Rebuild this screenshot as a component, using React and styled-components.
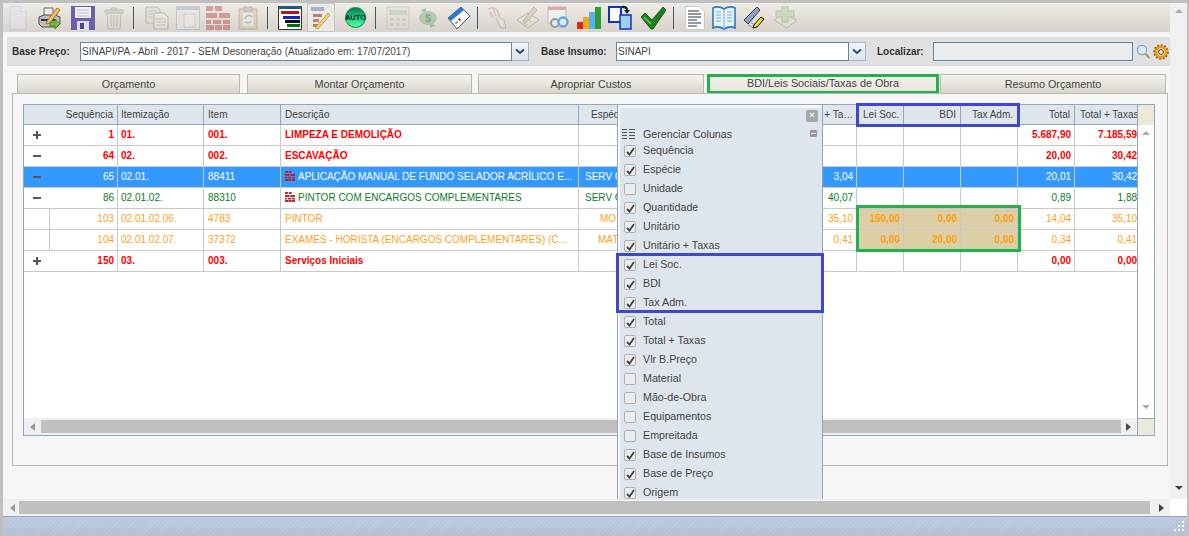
import React from 'react'
import styled, { createGlobalStyle } from 'styled-components'

const GlobalStyle = createGlobalStyle`
html, body {
    margin: 0;
    padding: 0;
    background: #c0c0c0;
    font-family: "Liberation Sans", Arial, sans-serif;
    font-size: 10px;
    color: #333;
}
* { box-sizing: border-box; }
`

const Page = styled.div`
    width: 1189px;
    height: 536px;
    padding: 3px 2px 2px 3px;
    background: #c0c0c0;
    display: flex;
    flex-direction: column;
    overflow: hidden;
`
const Viewport = styled.div`
    display: grid;
    grid-template-columns: 1167px 17px;
    grid-template-rows: 496px 17px;
    background: #f6f6f6;
`
const Content = styled.div`
    position: relative;
    overflow: hidden;
    background: #f6f6f6;
`
const Toolbar = styled.div`
    height: 29px;
    padding-left: 6px;
    display: flex;
    align-items: center;
    background: linear-gradient(#efebe6, #d7d2ca);
`
const Tool = styled.div`
    flex: none;
    margin-left: ${p => p.$ml || 0}px;
    width: ${p => p.$w}px;
    height: 25px;
    display: flex;
    align-items: center;
    justify-content: center;
    opacity: ${p => p.$off ? 0.38 : 1};
    ${p => p.$active && `
        height: 29px;
        background: #ebe9e6;
        border: 1px solid #c6c6c6;
    `}
`
const Sep = styled.div`
    flex: none;
    margin: 0 1px 0 ${p => p.$ml}px;
    width: 1px;
    height: 22px;
    background: #44566c;
`
const AutoBall = styled.div`
    width: 21px;
    height: 21px;
    border-radius: 50%;
    border: 1px solid #0c7a52;
    background: linear-gradient(#0b7a58, #17c878 45%, #4dffa0);
    color: #06231a;
    font-size: 7.5px;
    font-weight: bold;
    display: flex;
    align-items: center;
    justify-content: center;
`
const FilterBar = styled.div`
    margin: 5px 0 0 4px;
    height: 29px;
    padding-left: 5px;
    display: flex;
    align-items: center;
    background: #e0e0e0;
`
const Label = styled.span`
    flex: none;
    width: ${p => p.$w}px;
    margin-left: ${p => p.$ml || 0}px;
    font-weight: bold;
    color: #333;
`
const Field = styled.div`
    flex: none;
    width: ${p => p.$w}px;
    height: 19px;
    padding-left: 1px;
    display: flex;
    align-items: center;
    border: 1px solid #5d88ab;
    background: ${p => p.$empty ? '#ececec' : '#fff'};
    color: #444;
    font-size: 10px;
    white-space: nowrap;
`
const DropButton = styled.div`
    flex: none;
    width: 17px;
    height: 19px;
    display: flex;
    align-items: center;
    justify-content: center;
    border: 1px solid #a9b5c8;
    border-left: none;
    background: linear-gradient(#f2f4f8, #dde2ea);
`
const Finder = styled.div`
    flex: none;
    margin-left: ${p => p.$ml}px;
    display: flex;
`
const Tabs = styled.div`
    margin: 8px 0 0 14px;
    display: flex;
    height: 20px;
`
const Tab = styled.div`
    flex: none;
    width: ${p => p.$w}px;
    margin-left: ${p => p.$ml || 0}px;
    padding-bottom: 2px;
    display: flex;
    align-items: center;
    justify-content: center;
    border: 1px solid #bcb8b0;
    border-bottom: none;
    background: linear-gradient(#f4f2ee, #d9d4cb);
    color: #444;
    font-size: 10.8px;
    ${p => p.$marked && `
        border: none;
        background: linear-gradient(#f6f5f1, #e4e1d9);
        box-shadow: inset 0 0 0 3px #22b14c;
    `}
`
const Panel = styled.div`
    position: relative;
    margin: -1px 0 0 9px;
    width: 1156px;
    height: 373px;
    padding: 10px 0 0 10px;
    border: 1px solid #bcb9b2;
    background: #f6f6f6;
`
const Grid = styled.div`
    position: relative;
    width: 1132px;
    height: 332px;
    display: grid;
    grid-template-columns: 1113px 1fr;
    grid-template-rows: 1fr 17px;
    border: 1px solid #8fa8c0;
    background: #fff;
`
const TableArea = styled.div`
    overflow: hidden;
    background: #fff;
`
const Table = styled.table`
    width: 1113px;
    table-layout: fixed;
    border-collapse: separate;
    border-spacing: 0;
    font-size: 10px;
`
const Th = styled.th`
    height: 20px;
    padding: 0 ${p => p.$right ? '4px' : '2px'} 0 ${p => p.$pad ?? (p.$right ? 2 : 4)}px;
    background: #dfe5ec;
    border-right: 1px solid #8fa8c0;
    border-bottom: 1px solid #8fa8c0;
    color: #444;
    font-weight: normal;
    text-align: ${p => p.$right ? 'right' : 'left'};
    white-space: nowrap;
    overflow: hidden;
    text-overflow: ${p => p.$cut ? 'ellipsis' : 'clip'};
    &:last-child { border-right: none; padding-right: 0; }
`
const tones = {
    red: { color: '#ff0000', weight: 'bold', bg: '#fff' },
    blue: { color: '#fff', weight: 'normal', bg: '#3399ff' },
    green: { color: '#0a7a1e', weight: 'normal', bg: '#fff' },
    orange: { color: '#ff9f1c', weight: 'normal', bg: '#fff' },
}
const Row = styled.tr`
    color: ${p => tones[p.$tone].color};
    font-weight: ${p => tones[p.$tone].weight};
    background: ${p => tones[p.$tone].bg};
`
const Td = styled.td`
    height: 21px;
    padding: 0 ${p => p.$right ? '3px' : '2px'} 2px ${p => p.$pad ?? 4}px;
    border-right: 1px solid #c8c8c8;
    border-bottom: 1px solid #c8c8c8;
    white-space: nowrap;
    overflow: hidden;
    text-align: ${p => p.$right ? 'right' : 'left'};
    ${p => p.$fill && `
        background: #dccfa8;
        color: #ff9f0a;
        font-weight: bold;
    `}
    &:last-child { border-right: none; padding-right: 0; }
`
const ToggleCell = styled.td`
    height: 21px;
    padding: 0;
    border-bottom: 1px solid #c8c8c8;
    border-right: ${p => p.$leaf ? '1px solid #c8c8c8' : 'none'};
`
const Toggle = styled.span`
    position: relative;
    display: block;
    width: 8px;
    height: 8px;
    margin-left: 9px;
    &::before {
        content: "";
        position: absolute;
        left: 0;
        top: 3px;
        width: 8px;
        height: 2px;
        background: #555;
    }
    ${p => p.$plus && `
        &::after {
            content: "";
            position: absolute;
            left: 3px;
            top: 0;
            width: 2px;
            height: 8px;
            background: #555;
        }
    `}
`
const BrickBox = styled.span`
    display: inline-block;
    vertical-align: -1px;
    margin: 0 3px 0 0;
    height: 10px;
`
const VScroll = styled.div`
    display: flex;
    flex-direction: column;
    align-items: center;
    border-left: 1px solid #8fa8c0;
    background: #fff;
`
const ScrollCorner = styled.div`
    width: 100%;
    height: ${p => p.$h}px;
    flex: none;
    background: #ece9d8;
    ${p => p.$bottom && 'border-top: 1px solid #8fa8c0; border-left: 1px solid #8fa8c0;'}
`
const HScroll = styled.div`
    display: flex;
    align-items: center;
    padding: 0 ${p => p.$endPad}px 0 ${p => p.$startPad}px;
    background: #f0f0f0;
`
const Thumb = styled.div`
    flex: 1;
    height: 13px;
    margin: 0 ${p => p.$end}px 0 ${p => p.$start}px;
    background: #c0c0c0;
`
const Arrow = styled.span`
    flex: none;
    display: block;
    width: 0;
    height: 0;
    border-style: solid;
    border-color: transparent;
    ${p => p.$dir === 'left' && `border-width: 4px 5px 4px 0; border-right-color: ${p.$color};`}
    ${p => p.$dir === 'right' && `border-width: 4px 0 4px 5px; border-left-color: ${p.$color};`}
    ${p => p.$dir === 'up' && `border-width: 0 4px 4px; border-bottom-color: ${p.$color};`}
    ${p => p.$dir === 'down' && `border-width: 4px 4px 0; border-top-color: ${p.$color};`}
`
const VTrack = styled.div`
    flex: 1;
    display: flex;
    flex-direction: column;
    justify-content: space-between;
    align-items: center;
    padding: 6px 0 9px;
`
const PageVTrack = styled(VTrack)`
    background: #f0f0f0;
`
const HeaderMark = styled.div`
    position: absolute;
    left: 832px;
    top: -2px;
    width: 164px;
    height: 24px;
    border: 3px solid #3f48cc;
    pointer-events: none;
`
const CellsMark = styled.div`
    position: absolute;
    left: 832px;
    top: 100px;
    width: 165px;
    height: 47px;
    border: 3px solid #22b14c;
    pointer-events: none;
`
const Popup = styled.div`
    position: absolute;
    left: 614px;
    top: 101px;
    width: 206px;
    height: 420px;
    padding: 3px 0 0 2px;
    border: 1px solid #8fa8c0;
    background: #f4f6f8;
`
const PopupBody = styled.div`
    position: relative;
    height: 100%;
    padding-top: 17px;
    background: #dfe5ec;
    color: #444;
    font-size: 10.7px;
`
const CloseBtn = styled.div`
    position: absolute;
    right: 4px;
    top: 2px;
    width: 12px;
    height: 12px;
    border-radius: 2px;
    background: #a6a6a6;
    color: #eee;
    font-size: 9px;
    font-weight: bold;
    line-height: 11px;
    text-align: center;
`
const PopupHead = styled.div`
    position: relative;
    height: 18px;
    margin-bottom: -3px;
    padding-left: 23px;
    display: flex;
    align-items: center;
`
const ColumnsGlyph = styled.span`
    position: absolute;
    left: 2px;
    top: 4px;
    line-height: 0;
`
const Collapse = styled.span`
    position: absolute;
    right: 5px;
    top: 5px;
    width: 7px;
    height: 7px;
    border-radius: 1px;
    background: #9a9a9a;
    &::after {
        content: "";
        position: absolute;
        left: 1px;
        top: 3px;
        width: 5px;
        height: 1px;
        background: #eee;
    }
`
const OptionGroup = styled.div`
    position: relative;
    &::after {
        content: "";
        position: absolute;
        left: -4px;
        right: -2px;
        top: -1px;
        bottom: -2px;
        border: 3px solid #3f48cc;
        pointer-events: none;
    }
`
const Option = styled.div`
    height: 19px;
    padding-left: 23px;
    position: relative;
    display: flex;
    align-items: center;
`
const Check = styled.span`
    position: absolute;
    left: 4px;
    top: 5px;
    width: 12px;
    height: 12px;
    border: 1px solid #b0b0b0;
    border-radius: 2px;
    background: #ececec;
    display: flex;
    align-items: center;
    justify-content: center;
`
const HBar = styled(HScroll)`
    height: 17px;
`
const BarCorner = styled.div`
    background: #fff;
`
const StatusBar = styled.div`
    position: relative;
    height: 18px;
    border-top: 1px solid #8fa8c8;
    background:
        repeating-linear-gradient(135deg, rgba(255,255,255,.1) 0 1px, transparent 1px 3px),
        linear-gradient(#bcc8dc, #b2c0d8);
`
const Grip = styled.svg`
    position: absolute;
    right: 2px;
    bottom: 2px;
`

const IconNew = () => (
    <svg width="18" height="24" viewBox="0 0 18 24">
        <path d="M1 .5h11l5 5v18H1z" fill="#dde8f0" stroke="#aebcc8" />
        <path d="M12 .5v5h5" fill="#fff" stroke="#aebcc8" />
    </svg>
)
const IconPrint = () => (
    <svg width="23" height="24" viewBox="0 0 23 24">
        <path d="M6 2h9v9H6z" fill="#eee" stroke="#666" />
        <path d="M1 11l5-2h11l5 2v7l-3 3H4l-3-3z" fill="#bdbdbd" stroke="#4d4d4d" />
        <path d="M3 14h15" stroke="#333" strokeWidth="2" />
        <path d="M9 15L19 2l3 2-10 13-4 1z" fill="#f0c060" stroke="#a8741c" />
        <path d="M12 16h5v-3l5 5-5 5v-3h-5z" fill="#6dbd3c" stroke="#3f7f1e" strokeWidth=".7" />
    </svg>
)
const IconSave = () => (
    <svg width="24" height="24" viewBox="0 0 24 24">
        <path d="M0 0h24v24H0z" fill="#6a60b0" />
        <path d="M4 1h16v11H4z" fill="#f2f2f6" />
        <path d="M6 4h12M6 7h12M6 10h12" stroke="#b8b8cc" />
        <path d="M6 15h12v9H6z" fill="#dcdce6" />
        <path d="M9 17h4v6H9z" fill="#4c4390" />
    </svg>
)
const IconTrash = () => (
    <svg width="20" height="24" viewBox="0 0 20 24">
        <path d="M7 2h6v2H7zM1 4h18v3H1z" fill="#c4c4c4" stroke="#888" />
        <path d="M3 7h14l-1 16H4z" fill="#dcdcdc" stroke="#888" />
        <path d="M7 9v12M10 9v12M13 9v12" stroke="#8c8c8c" />
    </svg>
)
const IconCopy = () => (
    <svg width="24" height="24" viewBox="0 0 24 24">
        <path d="M1 1h11l3 3v13H1z" fill="#ddd" stroke="#777" />
        <path d="M9 7h10l4 4v12H9z" fill="#eee" stroke="#777" />
        <path d="M3 5h9M3 8h5M3 11h5M11 13h10M11 16h10M11 19h10" stroke="#999" />
    </svg>
)
const IconWindow = () => (
    <svg width="24" height="24" viewBox="0 0 24 24">
        <path d="M.5 .5h23v23H.5z" fill="#e6ecf2" stroke="#86a4c0" />
        <path d="M1 1h22v3H1z" fill="#86a4c0" />
        <path d="M8 8h11v13H8z" fill="#f4f4f4" stroke="#aaa" />
    </svg>
)
const IconBricks = ({ size = 24 }) => (
    <svg width={size} height={size} viewBox="0 0 24 24">
        <path d="M0 0h7v5H0zM0 7h11v5H0zM0 14h5v4H0zM0 19h8v5H0zM9 19h7v5H9zM17 19h7v5h-7zM7 14h8v4H7zM17 14h7v4h-7zM13 7h11v5H13zM9 0h7v5H9z" fill="#b22a2a" />
    </svg>
)
const IconClipboard = () => (
    <svg width="20" height="24" viewBox="0 0 20 24">
        <path d="M1 3h18v20H1z" fill="#d8c090" stroke="#8a6a3a" />
        <path d="M4 6h12v15H4z" fill="#f2f2f2" stroke="#aaa" />
        <path d="M6 1h8v4H6z" fill="#aaa" stroke="#666" />
        <path d="M7 13a4 4 0 0 1 7-2M13 15a4 4 0 0 1-6 1" fill="none" stroke="#3f9a4a" strokeWidth="1.5" />
    </svg>
)
const IconBars = () => (
    <svg width="24" height="24" viewBox="0 0 24 24">
        <path d="M.5 1.5h23v22H.5z" fill="#fff" stroke="#333" />
        <path d="M0 0h24v3H0z" fill="#1c5a80" />
        <path d="M3 5h18v3H3z" fill="#b01818" />
        <path d="M5 10h17v3H5z" fill="#1428c0" />
        <path d="M7 14h15v3H7z" fill="#111" />
        <path d="M9 18h13v3H9z" fill="#0b6a1a" />
    </svg>
)
const IconListEdit = () => (
    <svg width="20" height="24" viewBox="0 0 20 24">
        <path d="M0 1h13v4H0z" fill="#a8b0d0" />
        <path d="M2 8h9v3H2zM2 13h6v3H2zM2 18h5v3H2z" fill="#c08070" />
        <path d="M4 22L17 7l2 2L7 23z" fill="#f0d070" stroke="#b09040" strokeWidth=".7" />
    </svg>
)
const IconCalc = () => (
    <svg width="24" height="24" viewBox="0 0 24 24">
        <path d="M1 1h22v22H1z" fill="#e2e2d8" stroke="#aaa" />
        <path d="M3 4h18v5H3z" fill="#a0c0a0" />
        <path d="M4 12h4v3H4zM10 12h4v3h-4zM16 12h4v3h-4zM4 17h4v3H4zM10 17h4v3h-4zM16 17h4v3h-4z" fill="#bbb" />
    </svg>
)
const IconDollar = () => (
    <svg width="20" height="24" viewBox="0 0 20 24">
        <ellipse cx="10" cy="12" rx="9" ry="7" fill="#5cb060" />
        <path d="M2 5l6-3v4zM18 19l-6 3v-4z" fill="#3a8a40" />
        <text x="10" y="16" textAnchor="middle" fontSize="11" fontWeight="bold" fontFamily="Liberation Sans" fill="#123c18">$</text>
    </svg>
)
const IconCard = () => (
    <svg width="24" height="24" viewBox="0 0 24 24">
        <path d="M1 12L14 1l9 9-13 13z" fill="#fff" stroke="#555" />
        <path d="M1 12L14 1l3 3L4 15z" fill="#2a7ad8" />
        <path d="M11 13l2-1 1 2-2 1z" fill="#d02020" />
        <path d="M8 17l2-2 1 1-2 2z" fill="#2a7ad8" />
    </svg>
)
const IconHand = () => (
    <svg width="22" height="24" viewBox="0 0 22 24">
        <path d="M2 4c2-3 7-3 9 0l3 8 4 2v5M4 6l3 5M7 3l3 7" fill="none" stroke="#c08a80" strokeWidth="1.5" />
        <path d="M10 12l5 10h5l-2-8" fill="#eee" stroke="#777" />
    </svg>
)
const IconPencilNote = () => (
    <svg width="24" height="24" viewBox="0 0 24 24">
        <path d="M1 14l11-7 11 7-11 8z" fill="#efe8c8" stroke="#777" />
        <path d="M7 15l2 3 12-14-3-3z" fill="#c8b890" stroke="#777" />
        <path d="M6 16l6 3M10 13l6 3" stroke="#a89a60" />
    </svg>
)
const IconGears = () => (
    <svg width="24" height="24" viewBox="0 0 24 24">
        <path d="M2 1h18v16H2z" fill="#eee" stroke="#bbb" />
        <path d="M2 1h18v3H2z" fill="#e0a8a8" />
        <circle cx="9" cy="17" r="4" fill="#e6e6e6" stroke="#999" strokeWidth="2" />
        <circle cx="17" cy="16" r="4.5" fill="#dcecf8" stroke="#6aa4d8" strokeWidth="2.4" />
    </svg>
)
const IconChart = () => (
    <svg width="25" height="24" viewBox="0 0 25 24">
        <path d="M0 16h6v7H0z" fill="#e02818" />
        <path d="M6 11h6v12H6z" fill="#f0a818" />
        <path d="M12 6h6v17h-6z" fill="#58b0e8" />
        <path d="M18 1h6v22h-6z" fill="#2f9a38" />
    </svg>
)
const IconSwap = () => (
    <svg width="24" height="25" viewBox="0 0 24 25">
        <path d="M1 2h12v15H1z" fill="#fff" stroke="#1030c0" strokeWidth="2" />
        <path d="M12 10h11v14H12z" fill="#9cd0f0" stroke="#1030c0" strokeWidth="1.5" />
        <path d="M14 1c4-1 6 1 6 4h2l-3 4-3-4h2c0-1-1-2-4-2z" fill="#123" />
    </svg>
)
const IconCheck = () => (
    <svg width="25" height="24" viewBox="0 0 25 24">
        <path d="M0 11l4-4 7 7L22 1l3 3-13 19h-2z" fill="#1f7d1f" stroke="#0c4c10" strokeWidth=".8" />
        <path d="M3 11l7 7" stroke="#5cbb4a" strokeWidth="2" />
    </svg>
)
const IconLines = () => (
    <svg width="20" height="24" viewBox="0 0 20 24">
        <path d="M.5 .5h14l5 5v18H.5z" fill="#fff" stroke="#ccc" />
        <path d="M3 5h11M3 8h13M3 11h13M3 14h9M3 17h13M3 20h9" stroke="#234" />
    </svg>
)
const IconBook = () => (
    <svg width="24" height="24" viewBox="0 0 24 24">
        <path d="M1 2c4-2 8-1 11 1 3-2 7-3 11-1v20c-4-2-8-1-11 1-3-2-7-3-11-1z" fill="#e8f2fc" stroke="#2a78c8" strokeWidth="1.6" />
        <path d="M12 3v20M4 6h5M4 9h5M4 12h5M4 15h5M15 6h5M15 9h5M15 12h5M15 15h5" stroke="#7aa8d8" />
    </svg>
)
const IconPen = () => (
    <svg width="22" height="24" viewBox="0 0 22 24">
        <path d="M1 14L14 1l3 3L5 18z" fill="#8aa4c0" stroke="#334" />
        <path d="M5 19l6 3M8 17l5 2" stroke="#99a" />
        <path d="M11 19l7-8 3 2-7 8-4 1z" fill="#f4e020" stroke="#111" />
    </svg>
)
const IconPlus = () => (
    <svg width="25" height="24" viewBox="0 0 25 24">
        <path d="M1 14l9-6 14 6-10 8z" fill="#e8e4d8" stroke="#888" />
        <path d="M9 0h6v5h6v6h-6v5H9v-5H3V5h6z" fill="#9ccf90" stroke="#6a9a60" />
    </svg>
)
const Chevron = () => (
    <svg width="10" height="7" viewBox="0 0 10 7">
        <path d="M1 1.5l4 3.5 4-3.5" fill="none" stroke="#204a80" strokeWidth="2" />
    </svg>
)
const IconSearch = () => (
    <svg width="15" height="16" viewBox="0 0 15 16">
        <circle cx="6" cy="6" r="4.6" fill="#d8ecfa" stroke="#7aa8d0" strokeWidth="1.3" />
        <path d="M9.5 10l4 4" stroke="#c09050" strokeWidth="2" />
    </svg>
)
const IconGear = () => (
    <svg width="16" height="16" viewBox="0 0 16 16">
        <circle cx="8" cy="8" r="5.2" fill="none" stroke="#e89a20" strokeWidth="3" />
        <circle cx="8" cy="8" r="7" fill="none" stroke="#a86a10" strokeWidth="1.6" strokeDasharray="2 1.6" />
        <circle cx="8" cy="8" r="2.4" fill="#fbeed0" stroke="#6a4008" />
    </svg>
)
const CheckMark = () => (
    <svg width="9" height="9" viewBox="0 0 9 9">
        <path d="M1 5l2.5 2.5L8 1" fill="none" stroke="#444" strokeWidth="1.8" />
    </svg>
)

const rows = [
    { tone: 'red', plus: true, seq: '1', code: '01.', item: '001.', desc: 'LIMPEZA E DEMOLIÇÃO', total: '5.687,90', taxes: '7.185,59' },
    { tone: 'red', seq: '64', code: '02.', item: '002.', desc: 'ESCAVAÇÃO', total: '20,00', taxes: '30,42' },
    { tone: 'blue', seq: '65', code: '02.01.', item: '88411', brick: true, desc: 'APLICAÇÃO MANUAL DE FUNDO SELADOR ACRÍLICO E...', kind: 'SERV C', unit: '3,04', total: '20,01', taxes: '30,42' },
    { tone: 'green', seq: '86', code: '02.01.02.', item: '88310', brick: true, desc: 'PINTOR COM ENCARGOS COMPLEMENTARES', kind: 'SERV C', unit: '40,07', total: '0,89', taxes: '1,88' },
    { tone: 'orange', leaf: true, seq: '103', code: '02.01.02.06.', item: '4783', desc: 'PINTOR', kind: 'MO', kindPad: 21, unit: '35,10', lei: '150,00', bdi: '0,00', adm: '0,00', total: '14,04', taxes: '35,10' },
    { tone: 'orange', leaf: true, seq: '104', code: '02.01.02.07.', item: '37372', desc: 'EXAMES - HORISTA (ENCARGOS COMPLEMENTARES) (C...', kind: 'MAT', kindPad: 19, unit: '0,41', lei: '0,00', bdi: '20,00', adm: '0,00', total: '0,34', taxes: '0,41' },
    { tone: 'red', plus: true, seq: '150', code: '03.', item: '003.', desc: 'Serviços Iniciais', total: '0,00', taxes: '0,00' },
]

const widths = [26, 68, 86, 77, 298, 64, 70, 70, 74, 47, 57, 57, 57, 62]

const optionsBefore = [['Sequência', true], ['Espécie', true], ['Unidade', false], ['Quantidade', true], ['Unitário', true], ['Unitário + Taxas', true]]
const optionsMarked = [['Lei Soc.', true], ['BDI', true], ['Tax Adm.', true]]
const optionsAfter = [['Total', true], ['Total + Taxas', true], ['Vlr B.Preço', true], ['Material', false], ['Mão-de-Obra', false], ['Equipamentos', false], ['Empreitada', false], ['Base de Insumos', true], ['Base de Preço', true], ['Origem', true]]

function ColumnOption({ name, on }) {
    return (
        <Option>
            <Check>{on && <CheckMark />}</Check>
            {name}
        </Option>
    )
}

function DataRow({ row }) {
    const fill = Boolean(row.lei)
    return (
        <Row $tone={row.tone}>
            <ToggleCell $leaf={row.leaf}>{!row.leaf && <Toggle $plus={row.plus} />}</ToggleCell>
            <Td $right>{row.seq}</Td>
            <Td $pad={3}>{row.code}</Td>
            <Td>{row.item}</Td>
            <Td>
                {row.brick && <BrickBox><IconBricks size={10} /></BrickBox>}
                {row.desc}
            </Td>
            <Td $pad={row.kindPad ?? 6}>{row.kind}</Td>
            <Td />
            <Td />
            <Td $right>{row.unit}</Td>
            <Td $right $fill={fill}>{row.lei}</Td>
            <Td $right $fill={fill}>{row.bdi}</Td>
            <Td $right $fill={fill}>{row.adm}</Td>
            <Td $right>{row.total}</Td>
            <Td $right>{row.taxes}</Td>
        </Row>
    )
}

function App() {
    return (
        <Page>
            <GlobalStyle />
            <Viewport>
                <Content>
                    <Toolbar>
                        <Tool $w={18} $off><IconNew /></Tool>
                        <Tool $w={23} $ml={11}><IconPrint /></Tool>
                        <Tool $w={24} $ml={10}><IconSave /></Tool>
                        <Tool $w={20} $ml={9} $off><IconTrash /></Tool>
                        <Sep $ml={9} />
                        <Tool $w={24} $ml={10} $off><IconCopy /></Tool>
                        <Tool $w={24} $ml={7} $off><IconWindow /></Tool>
                        <Tool $w={24} $ml={6} $off><IconBricks /></Tool>
                        <Tool $w={20} $ml={8} $off><IconClipboard /></Tool>
                        <Sep $ml={9} />
                        <Tool $w={24} $ml={9}><IconBars /></Tool>
                        <Tool $w={28} $ml={5} $active><IconListEdit /></Tool>
                        <Tool $w={21} $ml={10}><AutoBall>AUTO</AutoBall></Tool>
                        <Sep $ml={9} />
                        <Tool $w={24} $ml={9} $off><IconCalc /></Tool>
                        <Tool $w={20} $ml={8} $off><IconDollar /></Tool>
                        <Tool $w={24} $ml={9}><IconCard /></Tool>
                        <Sep $ml={6} />
                        <Tool $w={22} $ml={7} $off><IconHand /></Tool>
                        <Tool $w={24} $ml={8} $off><IconPencilNote /></Tool>
                        <Tool $w={24} $ml={6}><IconGears /></Tool>
                        <Tool $w={25} $ml={7}><IconChart /></Tool>
                        <Tool $w={24} $ml={6}><IconSwap /></Tool>
                        <Tool $w={25} $ml={9}><IconCheck /></Tool>
                        <Sep $ml={7} />
                        <Tool $w={20} $ml={10}><IconLines /></Tool>
                        <Tool $w={24} $ml={7}><IconBook /></Tool>
                        <Tool $w={22} $ml={7}><IconPen /></Tool>
                        <Tool $w={25} $ml={8} $off><IconPlus /></Tool>
                    </Toolbar>

                    <FilterBar>
                        <Label $w={68}>Base Preço:</Label>
                        <Field $w={432}>SINAPI/PA - Abril - 2017 - SEM Desoneração (Atualizado em: 17/07/2017)</Field>
                        <DropButton><Chevron /></DropButton>
                        <Label $w={75} $ml={12}>Base Insumo:</Label>
                        <Field $w={233}>SINAPI</Field>
                        <DropButton><Chevron /></DropButton>
                        <Label $w={56} $ml={11}>Localizar:</Label>
                        <Field $w={200} $empty />
                        <Finder $ml={3}><IconSearch /></Finder>
                        <Finder $ml={2}><IconGear /></Finder>
                    </FilterBar>

                    <Tabs>
                        <Tab $w={223}>Orçamento</Tab>
                        <Tab $w={225} $ml={7}>Montar Orçamento</Tab>
                        <Tab $w={226} $ml={6}>Apropriar Custos</Tab>
                        <Tab $w={232} $ml={3} $marked>BDI/Leis Sociais/Taxas de Obra</Tab>
                        <Tab $w={226} $ml={1}>Resumo Orçamento</Tab>
                    </Tabs>

                    <Panel>
                        <Grid>
                            <TableArea>
                                <Table>
                                    <colgroup>
                                        {widths.map((w, i) => <col key={i} width={w} />)}
                                    </colgroup>
                                    <thead>
                                        <tr>
                                            <Th colSpan={2} $right>Sequência</Th>
                                            <Th $pad={3}>Itemização</Th>
                                            <Th>Item</Th>
                                            <Th>Descrição</Th>
                                            <Th $pad={12}>Espécie</Th>
                                            <Th>Quantidade</Th>
                                            <Th>Unitário</Th>
                                            <Th $cut $pad={4}>Unitário + Taxas</Th>
                                            <Th $pad={6}>Lei Soc.</Th>
                                            <Th $right>BDI</Th>
                                            <Th $right>Tax Adm.</Th>
                                            <Th $right>Total</Th>
                                            <Th $pad={5}>Total + Taxas</Th>
                                        </tr>
                                    </thead>
                                    <tbody>
                                        {rows.map(row => <DataRow key={row.seq} row={row} />)}
                                    </tbody>
                                </Table>
                            </TableArea>
                            <VScroll>
                                <ScrollCorner $h={20} />
                                <VTrack>
                                    <Arrow $dir="up" $color="#aaa" />
                                    <Arrow $dir="down" $color="#aaa" />
                                </VTrack>
                            </VScroll>
                            <HScroll $startPad={6} $endPad={6}>
                                <Arrow $dir="left" $color="#999" />
                                <Thumb $start={6} $end={5} />
                                <Arrow $dir="right" $color="#444" />
                            </HScroll>
                            <ScrollCorner $h={17} $bottom />
                            <HeaderMark />
                            <CellsMark />
                        </Grid>
                    </Panel>

                    <Popup>
                        <PopupBody>
                            <CloseBtn>×</CloseBtn>
                            <PopupHead>
                                <ColumnsGlyph>
                                    <svg width="13" height="10" viewBox="0 0 13 10">
                                        <path d="M0 .5h5M7 .5h6M0 3.5h5M7 3.5h6M0 6.5h5M7 6.5h6M0 9.5h5M7 9.5h6" stroke="#555" />
                                    </svg>
                                </ColumnsGlyph>
                                Gerenciar Colunas
                                <Collapse />
                            </PopupHead>
                            {optionsBefore.map(([name, on]) => <ColumnOption key={name} name={name} on={on} />)}
                            <OptionGroup>
                                {optionsMarked.map(([name, on]) => <ColumnOption key={name} name={name} on={on} />)}
                            </OptionGroup>
                            {optionsAfter.map(([name, on]) => <ColumnOption key={name} name={name} on={on} />)}
                        </PopupBody>
                    </Popup>
                </Content>
                <PageVTrack>
                    <Arrow $dir="up" $color="#aaa" />
                    <Arrow $dir="down" $color="#444" />
                </PageVTrack>
                <HBar $startPad={7} $endPad={6}>
                    <Arrow $dir="left" $color="#999" />
                    <Thumb $start={4} $end={9} />
                    <Arrow $dir="right" $color="#444" />
                </HBar>
                <BarCorner />
            </Viewport>
            <StatusBar>
                <Grip width="11" height="11" viewBox="0 0 11 11" fill="#fff">
                    <path d="M8 0h2v2H8zM4 4h2v2H4zM8 4h2v2H8zM0 8h2v2H0zM4 8h2v2H4zM8 8h2v2H8z" />
                </Grip>
            </StatusBar>
        </Page>
    )
}

export default App
